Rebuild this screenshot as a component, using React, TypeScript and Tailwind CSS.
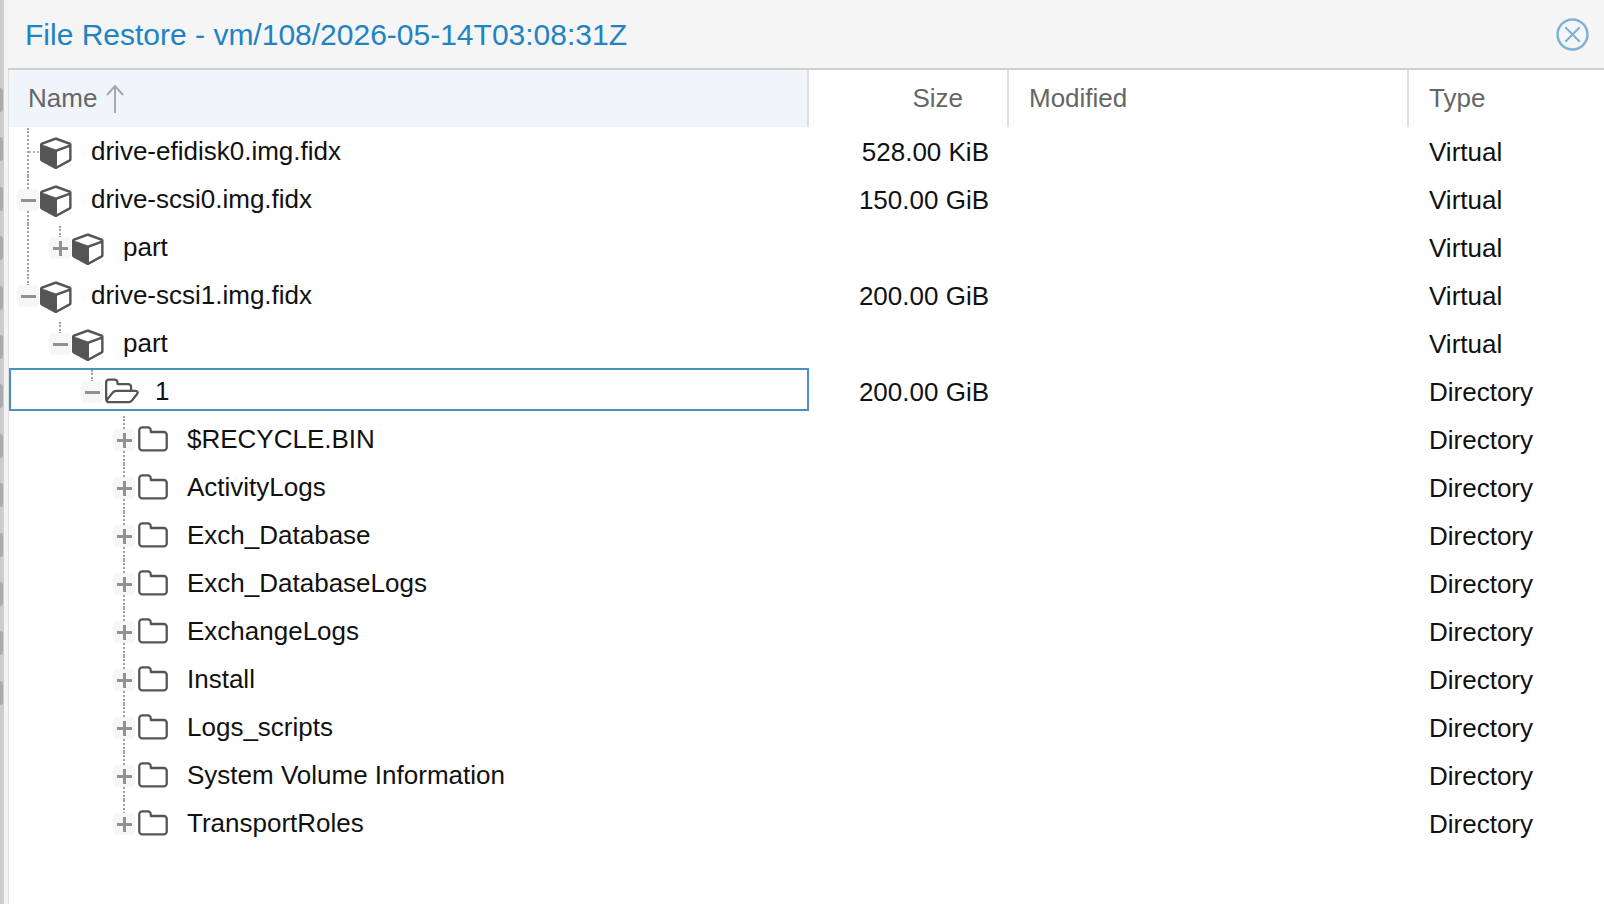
import { useState } from "react";

const FONT = "font-['Liberation_Sans',Arial,sans-serif]";

type Kind = "cube" | "folder" | "open";
type Row = {
  name: string;
  level: number;
  kind: Kind;
  toggle?: "plus" | "minus";
  size?: string;
  type: string;
  guide?: "top" | "full" | "last" | "leaf";
  parentLine?: boolean;
};

const ROWS: Row[] = [
  { name: "drive-efidisk0.img.fidx", level: 0, kind: "cube", size: "528.00 KiB", type: "Virtual", guide: "leaf" },
  { name: "drive-scsi0.img.fidx", level: 0, kind: "cube", toggle: "minus", size: "150.00 GiB", type: "Virtual", guide: "full" },
  { name: "part", level: 1, kind: "cube", toggle: "plus", type: "Virtual", guide: "top", parentLine: true },
  { name: "drive-scsi1.img.fidx", level: 0, kind: "cube", toggle: "minus", size: "200.00 GiB", type: "Virtual", guide: "top" },
  { name: "part", level: 1, kind: "cube", toggle: "minus", type: "Virtual", guide: "top" },
  { name: "1", level: 2, kind: "open", toggle: "minus", size: "200.00 GiB", type: "Directory", guide: "top" },
  { name: "$RECYCLE.BIN", level: 3, kind: "folder", toggle: "plus", type: "Directory", guide: "full" },
  { name: "ActivityLogs", level: 3, kind: "folder", toggle: "plus", type: "Directory", guide: "full" },
  { name: "Exch_Database", level: 3, kind: "folder", toggle: "plus", type: "Directory", guide: "full" },
  { name: "Exch_DatabaseLogs", level: 3, kind: "folder", toggle: "plus", type: "Directory", guide: "full" },
  { name: "ExchangeLogs", level: 3, kind: "folder", toggle: "plus", type: "Directory", guide: "full" },
  { name: "Install", level: 3, kind: "folder", toggle: "plus", type: "Directory", guide: "full" },
  { name: "Logs_scripts", level: 3, kind: "folder", toggle: "plus", type: "Directory", guide: "full" },
  { name: "System Volume Information", level: 3, kind: "folder", toggle: "plus", type: "Directory", guide: "full" },
  { name: "TransportRoles", level: 3, kind: "folder", toggle: "plus", type: "Directory", guide: "last" },
];

const DOTS = Array.from({ length: 13 }, (_, i) => i);

function NodeIcon({ kind }: { kind: Kind }) {
  if (kind === "cube") {
    return (
      <svg viewBox="0 0 1792 1792" className="-ml-[2px] mr-[17px] h-[34px] w-[34px] shrink-0 fill-[#555]">
        <path d="M896 1629l640-349v-636l-640 233v752zm-64-864l698-254-698-254-698 254zm832-252v768q0 35-18 65t-49 47l-704 384q-28 16-61 16t-61-16l-704-384q-31-17-49-47t-18-65v-768q0-40 23-73t61-47l704-256q22-8 44-8t44 8l704 256q38 14 61 47t23 73z" />
      </svg>
    );
  }
  if (kind === "open") {
    return (
      <svg viewBox="0 0 1920 1792" className="-ml-[1px] mr-[16px] h-[32px] w-[34px] shrink-0 fill-[#555]">
        <path d="M1781 931q0-35-53-35h-1088q-40 0-85.5 21.5t-71.5 52.5l-294 363q-18 24-18 40 0 35 53 35h1088q40 0 86-22t71-53l294-363q18-22 18-39zm-1141-163h768v-160q0-40-28-68t-68-28h-576q-40 0-68-28t-28-68v-64q0-40-28-68t-68-28h-320q-40 0-68 28t-28 68v853l256-315q44-53 116-87.5t140-34.5zm1269 163q0 62-46 120l-295 363q-43 53-116 87.5t-140 34.5h-1088q-92 0-158-66t-66-158v-960q0-92 66-158t158-66h320q92 0 158 66t66 158v32h544q92 0 158 66t66 158v160h192q54 0 99 24.5t67 70.5q15 32 15 68z" />
      </svg>
    );
  }
  return (
    <svg viewBox="0 0 1792 1792" className="-ml-[1px] mr-[18px] h-[32px] w-[32px] shrink-0 fill-[#555]">
      <path d="M1600 1312v-704q0-40-28-68t-68-28h-704q-40 0-68-28t-28-68v-64q0-40-28-68t-68-28h-320q-40 0-68 28t-28 68v960q0 40 28 68t68 28h1216q40 0 68-28t28-68zm128-704v704q0 92-66 158t-158 66h-1216q-92 0-158-66t-66-158v-960q0-92 66-158t158-66h320q92 0 158 66t66 158v32h672q92 0 158 66t66 158z" />
    </svg>
  );
}

function Dotted({ className }: { className: string }) {
  return <span className={`absolute left-[17px] w-0 border-l-2 border-dotted border-[#a0a0a0] ${className}`} />;
}

function Expander({ row }: { row: Row }) {
  return (
    <span className="relative flex h-full w-[32px] shrink-0 items-center justify-center">
      {row.guide === "leaf" && (
        <>
          <Dotted className="top-0 h-full" />
          <span className="absolute left-[19px] top-[23px] h-0 w-[10px] border-t-2 border-dotted border-[#b5b5b5]" />
        </>
      )}
      {row.guide === "full" && <Dotted className="top-0 h-full" />}
      {row.guide === "top" && <Dotted className="top-[2px] h-[12px]" />}
      {row.guide === "last" && <Dotted className="top-0 h-[14px]" />}
      {row.toggle && (
        <span className="relative ml-[4px] flex h-[22px] w-[22px] items-center justify-center rounded-[4px] bg-[#f7f7f7]">
          <span className="absolute h-[3px] w-[15px] bg-[#929292]" />
          {row.toggle === "plus" && <span className="absolute h-[15px] w-[3px] bg-[#929292]" />}
        </span>
      )}
    </span>
  );
}

function TreeRow({ row, selected, onSelect }: { row: Row; selected: boolean; onSelect: () => void }) {
  return (
    <div className="flex h-[48px] text-[26px] text-[#111]" onClick={onSelect}>
      <div className="relative flex w-[799px] shrink-0 items-center pl-[1px]">
        {selected && <span className="absolute inset-x-0 top-0 -right-[1px] h-[43px] border-2 border-[#4a90c2]" />}
        {Array.from({ length: row.level }, (_, i) => (
          <span key={i} className="relative h-full w-[32px] shrink-0">
            {row.parentLine && i === 0 && <Dotted className="top-0 h-full" />}
          </span>
        ))}
        <Expander row={row} />
        <NodeIcon kind={row.kind} />
        <span className="-translate-y-[1px] whitespace-nowrap">{row.name}</span>
      </div>
      <div className="flex w-[200px] shrink-0 items-center justify-end pr-[19px]">{row.size}</div>
      <div className="w-[400px] shrink-0" />
      <div className="flex items-center pl-[21px]">{row.type}</div>
    </div>
  );
}

export default function App() {
  const [selected, setSelected] = useState(5);

  return (
    <div className={`flex h-[904px] w-[1604px] overflow-hidden bg-white ${FONT}`}>
      <div className="flex w-[8px] shrink-0 flex-col gap-[25.4px] bg-[linear-gradient(90deg,#cbcbcb_0%,#cfcfcf_48%,#f3f3f3_55%,#f3f3f3_100%)] pt-[88px]">
        {DOTS.map((d) => (
          <span key={d} className="h-[24px] w-[3px] rounded-r-full bg-[#ababab]" />
        ))}
      </div>

      <div className="flex min-w-0 flex-1 flex-col">
        <div className="flex h-[70px] shrink-0 items-center justify-between border-b-2 border-[#cfcfcf] bg-[#f5f5f5] pl-[17px] pr-[15px]">
          <h1 className="text-[30px] font-normal text-[#2283c3]">File Restore - vm/108/2026-05-14T03:08:31Z</h1>
          <svg viewBox="0 0 32 32" className="h-[33px] w-[33px] fill-none stroke-[#7fb1d6]">
            <circle cx="16" cy="16" r="14.5" strokeWidth="2.4" />
            <path d="M9 9l14 14M23 9L9 23" strokeWidth="2" />
          </svg>
        </div>

        <div className="flex min-h-0 flex-1 flex-col border-l border-[#dedede]">
          <div className="flex h-[58px] shrink-0 pb-[1px] text-[26px] text-[#666]">
            <div className="flex w-[798px] shrink-0 items-center gap-[8px] bg-[#f0f5fb] pl-[19px]">
              <span>Name</span>
              <svg viewBox="0 0 20 30" className="h-[30px] w-[20px] fill-none stroke-[#a9a9a9]" strokeWidth="2">
                <path d="M10 29V2M2 11l8-9 8 9" />
              </svg>
            </div>
            <div className="flex w-[202px] shrink-0 items-center justify-end border-l-2 border-r-2 border-[#dedede] pr-[44px]">Size</div>
            <div className="flex w-[400px] shrink-0 items-center border-r-2 border-[#dedede] pl-[20px]">Modified</div>
            <div className="flex items-center pl-[20px]">Type</div>
          </div>

          {ROWS.map((row, i) => (
            <TreeRow key={i} row={row} selected={i === selected} onSelect={() => setSelected(i)} />
          ))}
        </div>
      </div>
    </div>
  );
}
